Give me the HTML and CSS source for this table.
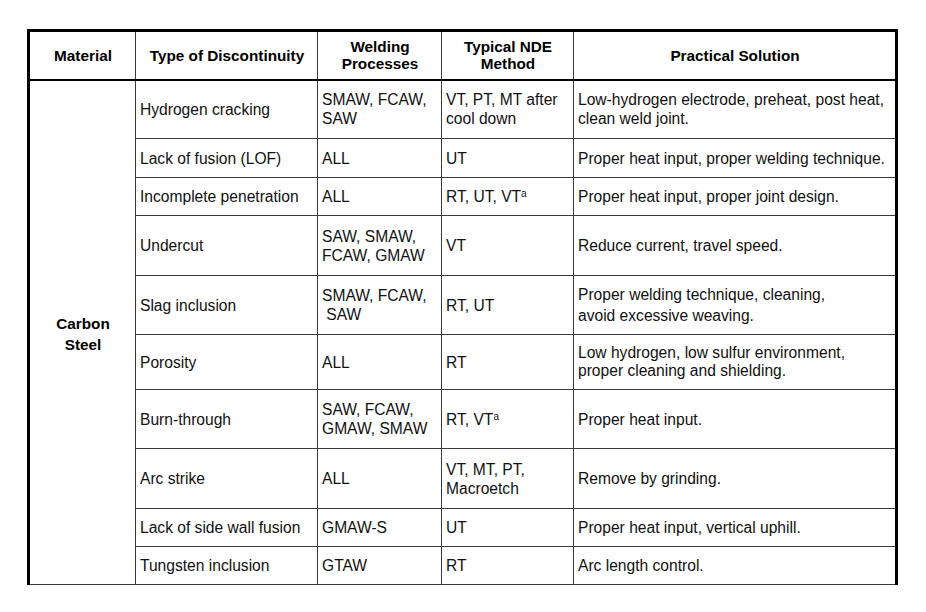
FILE: index.html
```html
<!DOCTYPE html>
<html>
<head>
<meta charset="utf-8">
<link rel="stylesheet" href="styles.css">
</head>
<body>
<table class="nde">
  <colgroup>
    <col class="c-mat">
    <col class="c-type">
    <col class="c-proc">
    <col class="c-nde">
    <col class="c-sol">
  </colgroup>
  <thead>
    <tr class="head">
      <th>Material</th>
      <th>Type of Discontinuity</th>
      <th>Welding<br>Processes</th>
      <th>Typical NDE<br>Method</th>
      <th>Practical Solution</th>
    </tr>
  </thead>
  <tbody>
    <tr class="r59">
      <td class="mat" rowspan="10">Carbon<br>Steel</td>
      <td>Hydrogen cracking</td>
      <td>SMAW, FCAW,<br>SAW</td>
      <td>VT, PT, MT after<br>cool down</td>
      <td>Low-hydrogen electrode, preheat, post heat,<br>clean weld joint.</td>
    </tr>
    <tr class="r39">
      <td>Lack of fusion (LOF)</td>
      <td>ALL</td>
      <td>UT</td>
      <td>Proper heat input, proper welding technique.</td>
    </tr>
    <tr class="r38">
      <td>Incomplete penetration</td>
      <td>ALL</td>
      <td>RT, UT, VT<sup>a</sup></td>
      <td>Proper heat input, proper joint design.</td>
    </tr>
    <tr class="r60">
      <td>Undercut</td>
      <td>SAW, SMAW,<br>FCAW, GMAW</td>
      <td>VT</td>
      <td>Reduce current, travel speed.</td>
    </tr>
    <tr class="r59">
      <td>Slag inclusion</td>
      <td>SMAW, FCAW,<br>&nbsp;SAW</td>
      <td>RT, UT</td>
      <td class="loose">Proper welding technique, cleaning,<br>avoid excessive weaving.</td>
    </tr>
    <tr class="r55">
      <td>Porosity</td>
      <td>ALL</td>
      <td>RT</td>
      <td class="tight">Low hydrogen, low sulfur environment,<br>proper cleaning and shielding.</td>
    </tr>
    <tr class="r59">
      <td>Burn-through</td>
      <td>SAW, FCAW,<br>GMAW, SMAW</td>
      <td>RT, VT<sup>a</sup></td>
      <td>Proper heat input.</td>
    </tr>
    <tr class="r60">
      <td>Arc strike</td>
      <td>ALL</td>
      <td>VT, MT, PT,<br>Macroetch</td>
      <td>Remove by grinding.</td>
    </tr>
    <tr class="r38">
      <td>Lack of side wall fusion</td>
      <td>GMAW-S</td>
      <td>UT</td>
      <td>Proper heat input, vertical uphill.</td>
    </tr>
    <tr class="r38">
      <td>Tungsten inclusion</td>
      <td>GTAW</td>
      <td>RT</td>
      <td>Arc length control.</td>
    </tr>
  </tbody>
</table>
</body>
</html>
```

FILE: styles.css
```css
html, body {
  margin: 0;
  padding: 0;
  background: #ffffff;
}

body {
  font-family: "Liberation Sans", Arial, sans-serif;
  color: #111111;
}

.nde {
  margin: 29px 0 0 27px;
  width: 868px;
  border-collapse: collapse;
  table-layout: fixed;
  font-size: 15.6px;
  line-height: 19px;
}

.c-mat { width: 107px; }
.c-type { width: 182px; }
.c-proc { width: 124px; }
.c-nde { width: 132px; }
.c-sol { width: 323px; }

.nde th,
.nde td {
  border: 1px solid #3a3a3a;
  padding: 0 3px 0 4px;
  vertical-align: middle;
  text-align: left;
  white-space: nowrap;
}

.nde th {
  font-size: 15.3px;
  font-weight: bold;
  text-align: center;
  line-height: 17px;
  border-top: 3px solid #000;
  border-bottom: 2px solid #000;
  color: #000;
}

.nde th:first-child,
.nde td.mat {
  border-left: 3px solid #000;
}

.nde th:last-child,
.nde tr td:last-child {
  border-right: 3px solid #000;
}

.head { height: 49px; }

.nde td.mat {
  font-size: 15.3px;
  font-weight: bold;
  text-align: center;
  line-height: 21px;
  color: #000;
  padding-top: 4px;
}

.r59 { height: 59px; }
.r60 { height: 60px; }
.r55 { height: 55px; }
.r39 { height: 39px; }
.r38 { height: 38px; }

.loose { line-height: 21px; }
.tight { line-height: 18px; }

.nde sup {
  font-size: 10px;
  line-height: 0;
  vertical-align: 5px;
}
```
